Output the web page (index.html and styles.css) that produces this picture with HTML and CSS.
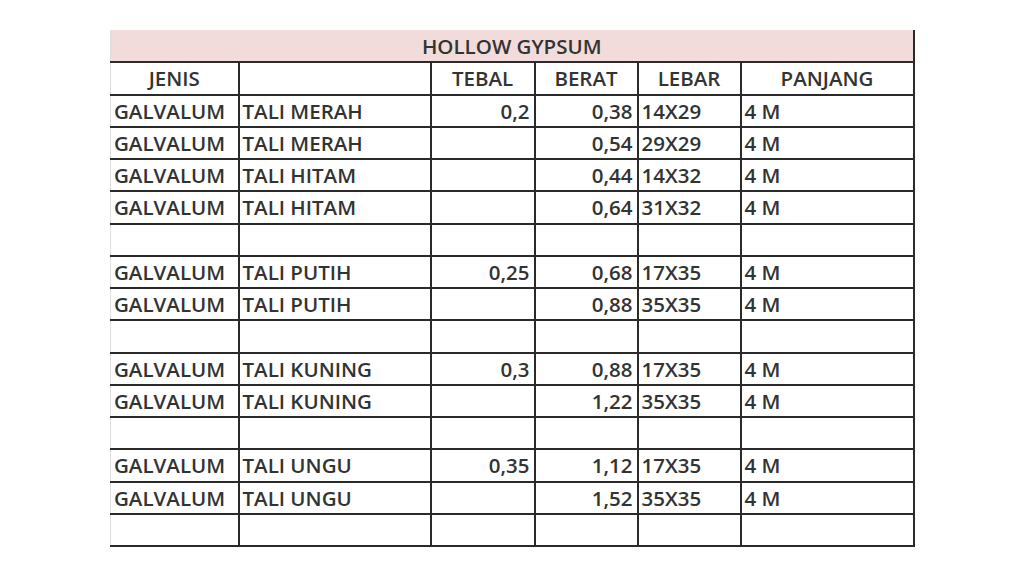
FILE: index.html
```html
<!DOCTYPE html>
<html>
<head>
<meta charset="utf-8">
<link rel="stylesheet" href="styles.css">
</head>
<body>
<table class="sheet">
  <colgroup>
    <col class="c1"><col class="c2"><col class="c3"><col class="c4"><col class="c5"><col class="c6">
  </colgroup>
  <tr class="title"><td colspan="6">HOLLOW GYPSUM</td></tr>
  <tr class="head"><td>JENIS</td><td></td><td>TEBAL</td><td>BERAT</td><td>LEBAR</td><td>PANJANG</td></tr>
  <tr><td>GALVALUM</td><td>TALI MERAH</td><td class="num">0,2</td><td class="num">0,38</td><td>14X29</td><td>4 M</td></tr>
  <tr><td>GALVALUM</td><td>TALI MERAH</td><td class="num"></td><td class="num">0,54</td><td>29X29</td><td>4 M</td></tr>
  <tr><td>GALVALUM</td><td>TALI HITAM</td><td class="num"></td><td class="num">0,44</td><td>14X32</td><td>4 M</td></tr>
  <tr><td>GALVALUM</td><td>TALI HITAM</td><td class="num"></td><td class="num">0,64</td><td>31X32</td><td>4 M</td></tr>
  <tr><td></td><td></td><td></td><td></td><td></td><td></td></tr>
  <tr><td>GALVALUM</td><td>TALI PUTIH</td><td class="num">0,25</td><td class="num">0,68</td><td>17X35</td><td>4 M</td></tr>
  <tr><td>GALVALUM</td><td>TALI PUTIH</td><td class="num"></td><td class="num">0,88</td><td>35X35</td><td>4 M</td></tr>
  <tr><td></td><td></td><td></td><td></td><td></td><td></td></tr>
  <tr><td>GALVALUM</td><td>TALI KUNING</td><td class="num">0,3</td><td class="num">0,88</td><td>17X35</td><td>4 M</td></tr>
  <tr><td>GALVALUM</td><td>TALI KUNING</td><td class="num"></td><td class="num">1,22</td><td>35X35</td><td>4 M</td></tr>
  <tr><td></td><td></td><td></td><td></td><td></td><td></td></tr>
  <tr><td>GALVALUM</td><td>TALI UNGU</td><td class="num">0,35</td><td class="num">1,12</td><td>17X35</td><td>4 M</td></tr>
  <tr><td>GALVALUM</td><td>TALI UNGU</td><td class="num"></td><td class="num">1,52</td><td>35X35</td><td>4 M</td></tr>
  <tr><td></td><td></td><td></td><td></td><td></td><td></td></tr>
</table>
</body>
</html>
```

FILE: styles.css
```css
html, body {
  margin: 0;
  padding: 0;
  background: #ffffff;
}

body {
  padding: 30px 0 0 110px;
  font-family: "Open Sans", "Liberation Sans", sans-serif;
}

.sheet {
  border-collapse: collapse;
  table-layout: fixed;
  width: 803px;
  font-size: 20.5px;
  font-weight: 600;
  line-height: 30px;
  color: #333333;
}

.c1 { width: 128px; }
.c2 { width: 192px; }
.c3 { width: 104px; }
.c4 { width: 103px; }
.c5 { width: 103px; }
.c6 { width: 173px; }

.sheet tr {
  height: 32.25px;
}

.sheet td {
  border: 2px solid #2a2a2a;
  padding: 0 3px;
  white-space: nowrap;
  overflow: hidden;
  text-align: left;
  vertical-align: middle;
}

.sheet td:first-child {
  border-left: 1px solid #dddddd;
}

.sheet td.num {
  text-align: right;
  padding-right: 4px;
}

.title td {
  background: #f2dcdb;
  text-align: center;
  border-top: none;
  border-left: 1px solid #e8dede;
}

.head td {
  text-align: center;
}
```
